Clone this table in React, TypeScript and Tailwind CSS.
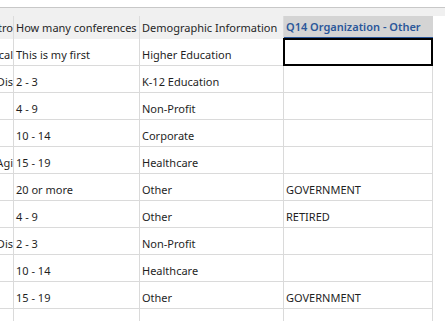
const rows: [string, string, string, string][] = [
  ["cal", "This is my first", "Higher Education", ""],
  ["Dis", "2 - 3", "K-12 Education", ""],
  ["", "4 - 9", "Non-Profit", ""],
  ["", "10 - 14", "Corporate", ""],
  ["Agi", "15 - 19", "Healthcare", ""],
  ["", "20 or more", "Other", "GOVERNMENT"],
  ["", "4 - 9", "Other", "RETIRED"],
  ["Dis", "2 - 3", "Non-Profit", ""],
  ["", "10 - 14", "Healthcare", ""],
  ["", "15 - 19", "Other", "GOVERNMENT"],
  ["", "", "", ""],
];

export default function App() {
  return (
    <div
      className="w-[445px] h-[321px] overflow-hidden bg-white text-[11px] text-[#1f1f1f]"
      style={{ fontFamily: '"Noto Sans", "Open Sans", sans-serif' }}
    >
      <div className="h-[7px] bg-white" />
      <div className="h-[9px] bg-[#f0f0f0] border-t border-[#c8c8c8]" />
      {/* header row */}
      <div className="flex h-[23px]">
        <div className="flex w-[433px] bg-[#f0f0f0]">
          <div className="w-[13px] overflow-hidden flex justify-end items-center whitespace-nowrap text-[#262626] pt-[1px]">
            tro
          </div>
          <div className="w-[126px] border-l border-[#dcdcdc] pl-[2px] flex items-center whitespace-nowrap text-[#262626] pt-[1px]">
            How many conferences
          </div>
          <div className="w-[144px] border-l border-[#dcdcdc] pl-[2px] flex items-center whitespace-nowrap overflow-hidden text-[#262626] pt-[1px]">
            Demographic Information
          </div>
          <div className="w-[150px] bg-[#d4d4d4] border-l border-[#dcdcdc] pl-[2px] flex items-center whitespace-nowrap font-semibold text-[#2b579a] shadow-[inset_0_-2px_0_#2b579a]">
            Q14 Organization - Other
          </div>
        </div>
        <div className="flex-1 bg-white" />
      </div>
      {/* body */}
      <div className="flex flex-col">
        {rows.map((r, i) => (
          <div key={i} className="flex h-[27px]">
            <div className="flex w-[433px] border-b border-[#dadada]">
              <div className="w-[13px] overflow-hidden flex justify-end items-center whitespace-nowrap pt-[6px]">
                {r[0]}
              </div>
              <div className="w-[126px] border-l border-[#dadada] pl-[2px] flex items-center whitespace-nowrap pt-[6px]">
                {r[1]}
              </div>
              <div className="w-[144px] border-l border-[#dadada] pl-[2px] flex items-center whitespace-nowrap pt-[6px]">
                {r[2]}
              </div>
              <div
                className={
                  i === 0
                    ? "w-[150px] border-2 border-black -mt-[1px] -mb-[1px] pl-[1px] flex items-center whitespace-nowrap"
                    : "w-[150px] border-l border-r border-[#dadada] pl-[2px] flex items-center whitespace-nowrap pt-[6px]"
                }
              >
                {r[3]}
              </div>
            </div>
            <div className="flex-1 bg-white" />
          </div>
        ))}
      </div>
    </div>
  );
}
